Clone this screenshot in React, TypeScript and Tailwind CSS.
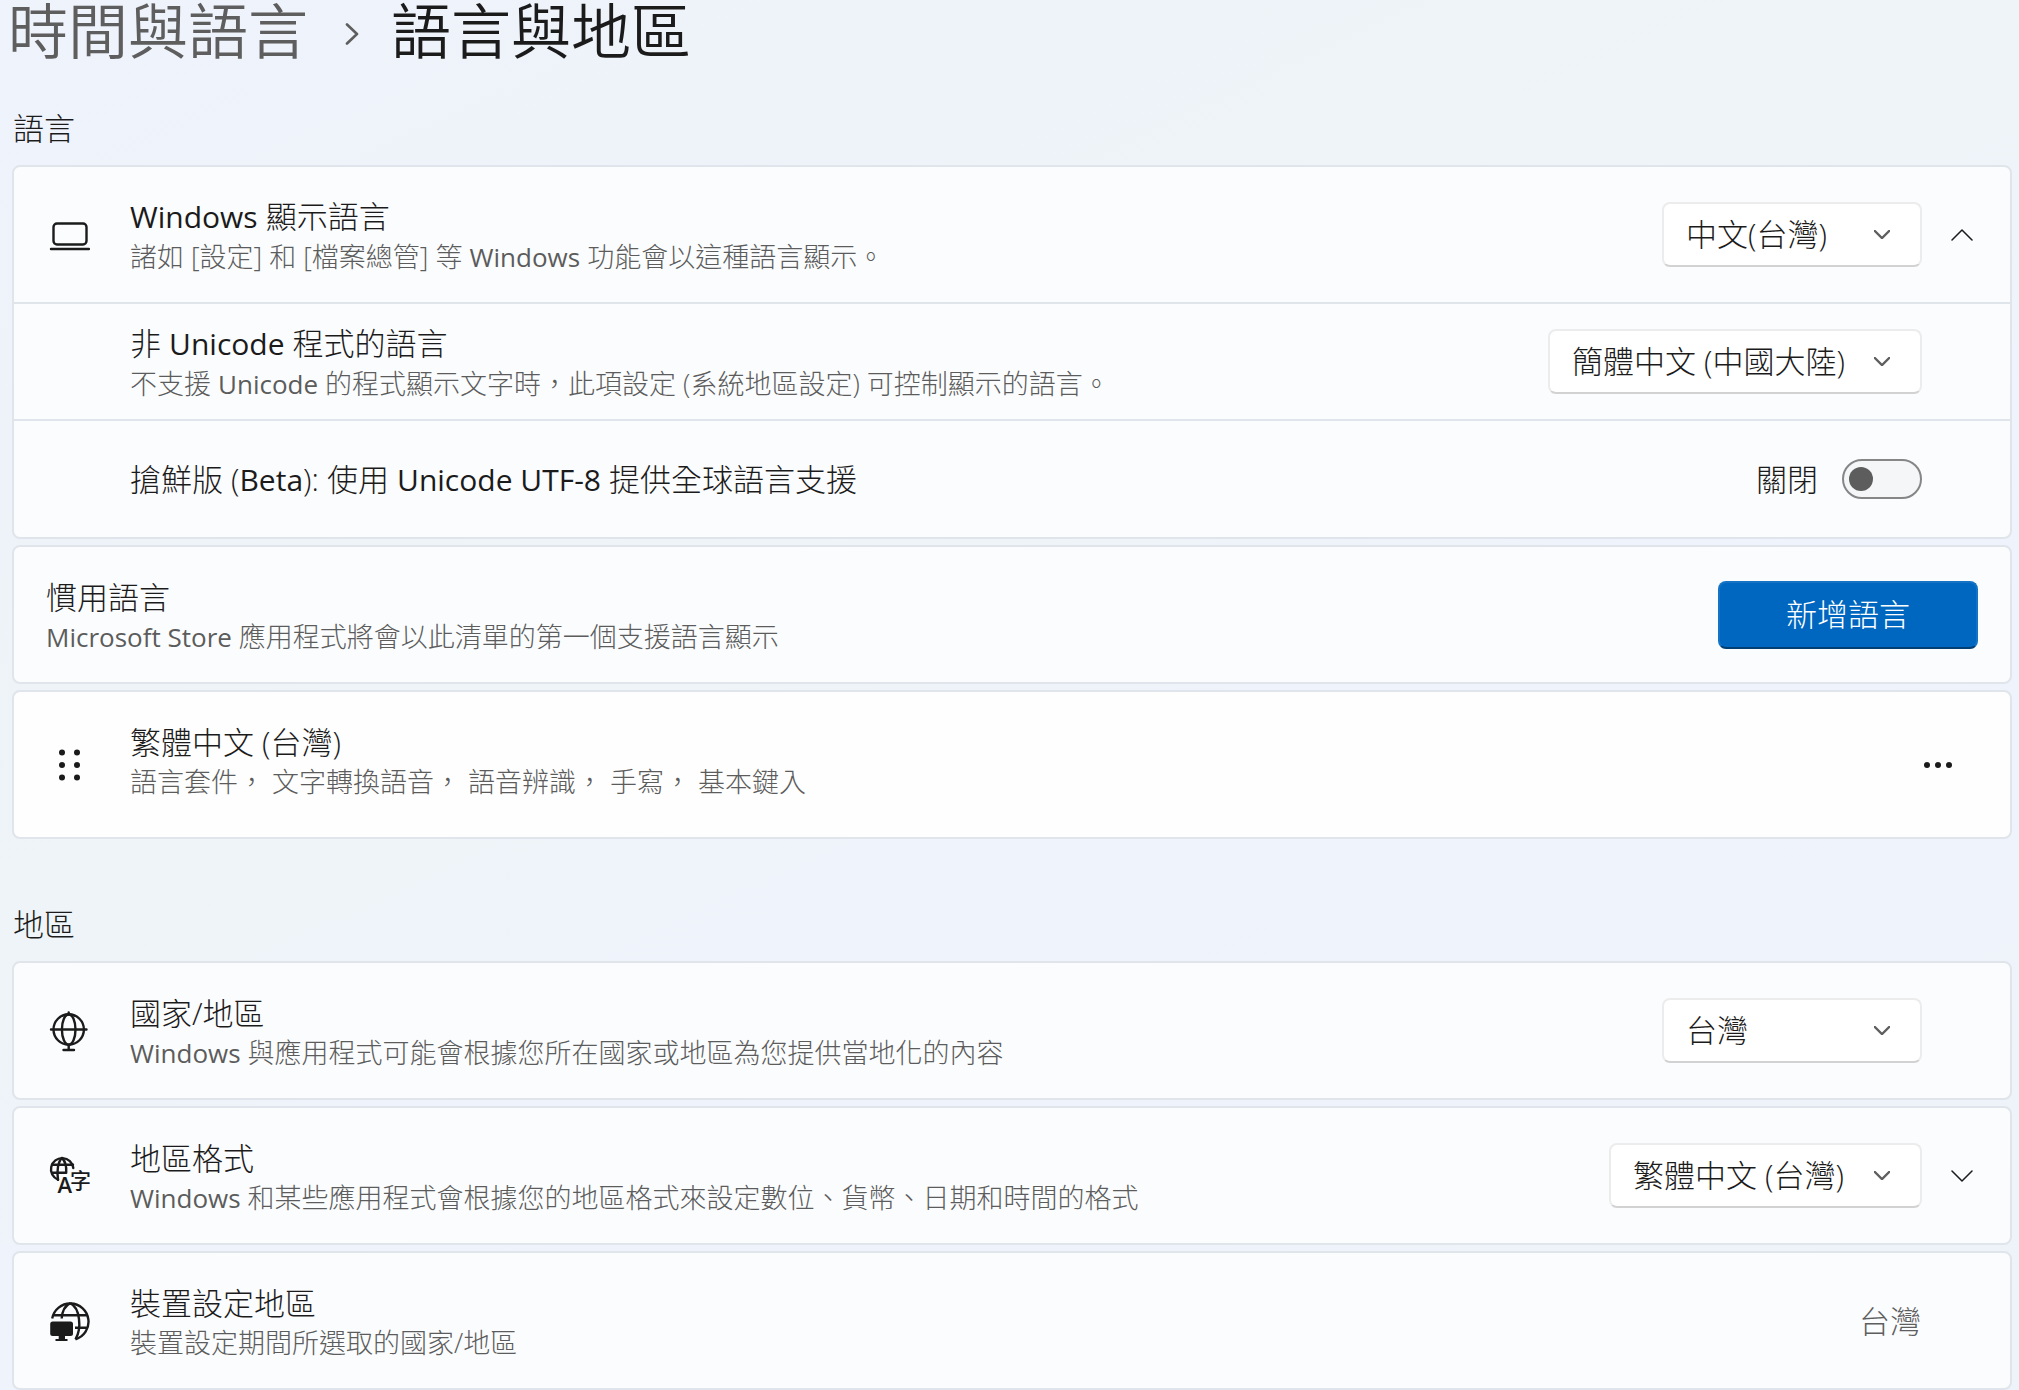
import React, { useState } from "react";
import clsx from "clsx";

const SANS = "font-['Open_Sans','Noto_Sans_CJK_TC',sans-serif]";

/* Icons */
function LaptopIcon() {
  return (
    <svg viewBox="0 0 42 42" className="size-[42px]" fill="none" stroke="currentColor" strokeWidth="2.4" strokeLinecap="round" aria-hidden="true">
      <rect x="5.5" y="9.5" width="33" height="21" rx="3.5" />
      <path d="M3 35H41" />
    </svg>
  );
}

function GlobeStandIcon() {
  return (
    <svg viewBox="0 0 42 42" className="size-[42px]" fill="none" stroke="currentColor" strokeWidth="2.4" strokeLinecap="round" aria-hidden="true">
      <circle cx="20.7" cy="19.5" r="15.2" />
      <ellipse cx="20.7" cy="19.5" rx="6.8" ry="15.2" />
      <path d="M3 19.500H38.500M20.700 2.500V4.500M20.700 35V39.500M15.500 40H26" />
    </svg>
  );
}

function GlobeTextIcon() {
  return (
    <svg viewBox="0 0 42 42" className="size-[42px]" fill="none" stroke="currentColor" strokeWidth="2.4" strokeLinecap="round" aria-hidden="true">
      <path d="M25.300 13A11.200 11.200 0 1 0 10 24.700" />
      <path d="M14 3C10 6.500 8.600 16 10 24.700M14 3C17.200 6 18.600 11 18.200 17.800M4 9.800H25M4 17.800H18.200" />
      <text x="9.5" y="38" fontSize="22" fontWeight="600" fill="currentColor" stroke="none">A</text>
      <text x="22" y="33" fontSize="21" fontWeight="500" fill="currentColor" stroke="none">字</text>
    </svg>
  );
}

function GlobeDesktopIcon() {
  return (
    <svg viewBox="0 0 42 42" className="size-[42px]" fill="none" stroke="currentColor" strokeWidth="2.4" aria-hidden="true">
      <path d="M4.200 18.500A18.300 18.300 0 1 1 27.500 39.300" />
      <path d="M22.300 3.200C17.500 5.500 14.200 11 13.700 18.500M22.300 3.200C32 8 34 28 27.500 39.300M5.500 15.200H39.500M27 27.800H39.500" />
      <rect x="2.200" y="21.500" width="22.800" height="14.600" rx="2.500" fill="currentColor" stroke="none" />
      <path d="M10.700 36H17V39H19.500V41H7.500V39H10.700Z" fill="currentColor" stroke="none" />
    </svg>
  );
}

function GripIcon() {
  return (
    <svg viewBox="0 0 42 42" className="size-[42px]" fill="currentColor" aria-hidden="true">
      {[8.5, 21, 33.5].map((y) => (
        <React.Fragment key={y}>
          <circle cx="14" cy={y} r="3" />
          <circle cx="29" cy={y} r="3" />
        </React.Fragment>
      ))}
    </svg>
  );
}

function Chevron({ up, className }: { up?: boolean; className?: string }) {
  return (
    <svg viewBox="0 0 22 12" className={className} fill="none" stroke="currentColor" strokeLinecap="round" strokeLinejoin="round" aria-hidden="true">
      <path d={up ? "M1 11L11 1L21 11" : "M1 1L11 11L21 1"} />
    </svg>
  );
}

/* Latin runs are set a step smaller and heavier than the CJK around them */
function Mixed({ text, latin }: { text: string; latin: string }) {
  return (
    <>
      {text.split(/([A-Za-z][\w-]*(?: [A-Za-z][\w-]*)*)/).map((part, i) =>
        i % 2 ? <span key={i} className={latin}>{part}</span> : part
      )}
    </>
  );
}

/* Building blocks */
function Card({ children, className }: { children: React.ReactNode; className?: string }) {
  return (
    <div className={clsx("rounded-lg border-2 border-[#e0e5eb]", className ?? "bg-[#fbfcfe]")}>
      {children}
    </div>
  );
}

interface RowProps {
  icon?: React.ReactNode;
  title: string;
  desc?: string;
  flush?: boolean;
  className?: string;
  textClassName?: string;
  children?: React.ReactNode;
}

function Row({ icon, title, desc, flush, className, textClassName, children }: RowProps) {
  return (
    <div className={clsx("flex items-center", className ?? "h-[135px]")}>
      {!flush && <div className="ml-[34px] flex w-[82px] shrink-0">{icon}</div>}
      <div className={clsx("min-w-0 flex-1", flush && "ml-8", desc && "pt-1", textClassName)}>
        <div className="text-[31px] leading-10">
          <Mixed text={title} latin="text-[30px] font-normal" />
        </div>
        {desc && (
          <div className="text-[27px] leading-10 text-[#5c5c5c]">
            <Mixed text={desc} latin="text-[26px] font-normal" />
          </div>
        )}
      </div>
      {children}
    </div>
  );
}

function Select({ label, options, className }: { label: string; options: string[]; className: string }) {
  return (
    <div className={clsx("grid shrink-0 items-center", className)}>
      <select
        aria-label={label}
        className="col-start-1 row-start-1 h-[65px] w-full appearance-none rounded-lg border-2 border-[#ececec] border-b-[#d2d2d2] bg-white pl-[22px] text-[31px]"
      >
        {options.map((o) => (
          <option key={o}>{o}</option>
        ))}
      </select>
      <Chevron className="pointer-events-none col-start-1 row-start-1 mr-8 h-[9px] w-4 justify-self-end stroke-[3px] text-[#5f5f5f]" />
    </div>
  );
}

function Expander({ label, open }: { label: string; open?: boolean }) {
  return (
    <button type="button" aria-label={label} aria-expanded={!!open} className="flex w-[88px] shrink-0 justify-center pr-2">
      <Chevron up={open} className="h-3 w-[22px] stroke-[1.5px]" />
    </button>
  );
}

export default function App() {
  const [utf8, setUtf8] = useState(false);

  return (
    <main
      lang="zh-Hant-TW"
      className={clsx(
        SANS,
        "min-h-screen bg-[linear-gradient(155deg,#eff3fc_0%,#eef3f9_22%,#eef4f7_40%,#eff3fc_58%,#eef3f9_100%)] pr-[7px] pl-3 font-light text-[#1b1b1b]"
      )}
    >
      {/* Breadcrumb */}
      <nav className="flex h-[90px] items-start text-[60px] leading-[62px] font-[350]">
        <a href="#time" className="-ml-1 text-[#5e5e5e]">時間與語言</a>
        <svg viewBox="0 0 14 22" className="mt-[23px] ml-[37px] h-[22px] w-[14px] text-[#5e5e5e]" fill="none" stroke="currentColor" strokeWidth="2.6" strokeLinecap="round" strokeLinejoin="round" aria-hidden="true">
          <path d="M2 1.500L12 11L2 20.500" />
        </svg>
        <h1 className="ml-8">語言與地區</h1>
      </nav>

      {/* Language */}
      <section>
        <h2 className="h-[75px] pt-[18px] pl-px text-[31px] leading-10">語言</h2>
        <div className="flex flex-col gap-1.5">
          <Card>
            <Row icon={<LaptopIcon />} title="Windows 顯示語言" desc="諸如 [設定] 和 [檔案總管] 等 Windows 功能會以這種語言顯示。">
              <Select label="Windows 顯示語言" options={["中文(台灣)"]} className="w-[260px]" />
              <Expander label="Windows 顯示語言" open />
            </Row>
            <Row
              title="非 Unicode 程式的語言"
              desc="不支援 Unicode 的程式顯示文字時，此項設定 (系統地區設定) 可控制顯示的語言。"
              className="h-[117px] border-t-2 border-[#e0e5eb]"
            >
              <Select label="非 Unicode 程式的語言" options={["簡體中文 (中國大陸)"]} className="mr-[88px] w-[374px]" />
            </Row>
            <Row title="搶鮮版 (Beta): 使用 Unicode UTF-8 提供全球語言支援" className="h-[118px] border-t-2 border-[#e0e5eb]">
              <label className="mr-[88px] flex shrink-0 items-center gap-6 text-[31px] leading-10">
                {utf8 ? "開啟" : "關閉"}
                <input
                  type="checkbox"
                  role="switch"
                  checked={utf8}
                  onChange={(e) => setUtf8(e.target.checked)}
                  className="flex h-10 w-20 appearance-none items-center rounded-full border-2 border-[#868686] bg-[#f5f6f8] px-[5px] before:size-6 before:rounded-full before:bg-[#5d5d5d] checked:justify-end checked:border-[#0067c0] checked:bg-[#0067c0] checked:before:bg-white"
                />
              </label>
            </Row>
          </Card>

          <Card>
            <Row flush title="慣用語言" desc="Microsoft Store 應用程式將會以此清單的第一個支援語言顯示">
              <button
                type="button"
                className="mr-8 h-[68px] w-[260px] shrink-0 rounded-lg border-2 border-[#1473c5] border-b-[#003e73] bg-[#0067c0] text-[31px] text-white"
              >
                新增語言
              </button>
            </Row>
          </Card>

          <Card className="bg-[#fefefe]">
            <Row
              icon={<GripIcon />}
              title="繁體中文 (台灣)"
              desc="語言套件， 文字轉換語音， 語音辨識， 手寫， 基本鍵入"
              className="h-[145px]"
              textClassName="mb-2.5"
            >
              <button type="button" aria-label="更多選項" className="mr-[57px] shrink-0">
                <svg viewBox="0 0 30 8" className="h-2 w-[30px]" fill="currentColor" aria-hidden="true">
                  <circle cx="4" cy="4" r="3" />
                  <circle cx="15" cy="4" r="3" />
                  <circle cx="26" cy="4" r="3" />
                </svg>
              </button>
            </Row>
          </Card>
        </div>
      </section>

      {/* Region */}
      <section className="pt-[47px]">
        <h2 className="h-[75px] pt-[18px] pl-px text-[31px] leading-10">地區</h2>
        <div className="flex flex-col gap-1.5">
          <Card>
            <Row icon={<GlobeStandIcon />} title="國家/地區" desc="Windows 與應用程式可能會根據您所在國家或地區為您提供當地化的內容">
              <Select label="國家/地區" options={["台灣"]} className="mr-[88px] w-[260px]" />
            </Row>
          </Card>
          <Card>
            <Row icon={<GlobeTextIcon />} title="地區格式" desc="Windows 和某些應用程式會根據您的地區格式來設定數位、貨幣、日期和時間的格式">
              <Select label="地區格式" options={["繁體中文 (台灣)"]} className="w-[313px]" />
              <Expander label="地區格式" />
            </Row>
          </Card>
          <Card>
            <Row icon={<GlobeDesktopIcon />} title="裝置設定地區" desc="裝置設定期間所選取的國家/地區">
              <div className="mr-[89px] shrink-0 text-[31px] leading-10 text-[#5e5e5e]">台灣</div>
            </Row>
          </Card>
        </div>
      </section>
    </main>
  );
}
